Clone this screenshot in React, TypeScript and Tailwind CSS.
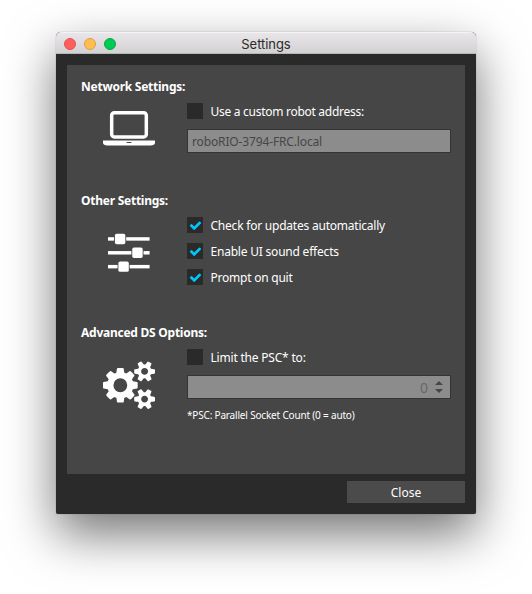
import type { ReactNode } from "react";

const SMALL_COG =
  "v140q0 16-149 31-12 27-30 52 51 113 51 138 0 4-4 7-122 71-124 71-8 0-46-47t-52-68q-20 2-30 2t-30-2q-14 21-52 68t-46 47q-2 0-124-71-4-3-4-7 0-25 51-138-18-25-30-52-149-15-149-31v-140q0-16 149-31 13-29 30-52-51-113-51-138 0-4 4-7 4-2 35-20t59-34 30-16q8 0 46 46.5t52 67.5q20-2 30-2t30 2q51-71 92-112l6-2q4 0 124 70 4 3 4 7 0 25-51 138 17 23 30 52 149 15 149 31z";

function LaptopIcon() {
  return (
    <svg viewBox="0 0 1920 1792" className="h-[48.5px] w-[52px] fill-white">
      <path d="M416 1280q-66 0-113-47t-47-113v-704q0-66 47-113t113-47h1088q66 0 113 47t47 113v704q0 66-47 113t-113 47h-1088zm-32-864v704q0 13 9.5 22.5t22.5 9.5h1088q13 0 22.5-9.5t9.5-22.5v-704q0-13-9.5-22.5t-22.5-9.5h-1088q-13 0-22.5 9.5t-9.5 22.5zm1376 928h160v96q0 40-47 68t-113 28h-1600q-66 0-113-28t-47-68v-96h1760zm-720 96q16 0 16-16t-16-16h-160q-16 0-16 16t16 16h160z" />
    </svg>
  );
}

function SlidersIcon() {
  const rows = [
    { y: 192, knob: 256 },
    { y: 704, knob: 896 },
    { y: 1216, knob: 384 },
  ];
  return (
    <svg viewBox="0 0 1536 1536" className="size-[41.6px] fill-white">
      {rows.map(({ y, knob }) => (
        <g key={y}>
          <rect x="0" y={y} width={knob - 32} height="128" />
          <rect x={knob} y={y - 128} width="384" height="384" rx="64" />
          <rect x={knob + 416} y={y} width={1536 - knob - 416} height="128" />
        </g>
      ))}
    </svg>
  );
}

function CogsIcon() {
  return (
    <svg viewBox="0 0 1920 1792" className="h-[48.5px] w-[52px] fill-white">
      <path
        d={
          "M896 896q0-106-75-181t-181-75-181 75-75 181 75 181 181 75 181-75 75-181zm768 512q0-52-38-90t-90-38-90 38-38 90q0 53 37.5 90.5t90.5 37.5 90.5-37.5 37.5-90.5zm0-1024q0-52-38-90t-90-38-90 38-38 90q0 53 37.5 90.5t90.5 37.5 90.5-37.5 37.5-90.5zm-384 421v185q0 10-7 19.5t-16 10.5l-155 24q-11 35-32 76 34 48 90 115 7 11 7 20 0 12-7 19-23 30-82.5 89.5t-78.5 59.5q-11 0-21-7l-115-90q-37 19-77 31-11 108-23 155-7 24-30 24h-186q-11 0-20-7.5t-10-17.5l-23-153q-34-10-75-31l-118 89q-7 7-20 7-11 0-21-8-144-133-144-160 0-9 7-19 10-14 41-53t47-61q-23-44-35-82l-152-24q-10-1-17-9.5t-7-19.5v-185q0-10 7-19.5t16-10.5l155-24q11-35 32-76-34-48-90-115-7-11-7-20 0-12 7-20 22-30 82-89t79-59q11 0 21 7l115 90q34-18 77-32 11-108 23-154 7-24 30-24h186q11 0 20 7.5t10 17.5l23 153q34 10 75 31l118-89q8-7 20-7 11 0 21 8 144 133 144 160 0 8-7 19-12 16-42 54t-45 60q23 48 34 82l152 23q10 2 17 10.5t7 19.5zM1920 1338" +
          SMALL_COG +
          "M1920 314" +
          SMALL_COG
        }
      />
    </svg>
  );
}

function CheckRow({ checked, label, tracking }: { checked?: boolean; label: string; tracking: string }) {
  return (
    <label className="flex h-4 items-center gap-[7.5px]">
      <span className="flex size-4 items-center justify-center bg-[#2a2a2a]">
        {checked && (
          <svg viewBox="0 0 1792 1792" className="size-[13px] fill-[#00c8ff]">
            <path d="M1671 566q0 40-28 68l-724 724-136 136q-28 28-68 28t-68-28l-136-136-362-362q-28-28-28-68t28-68l136-136q28-28 68-28t68 28l294 295 656-657q28-28 68-28t68 28l136 136q28 28 28 68z" />
          </svg>
        )}
      </span>
      <span className={"pt-0.5 leading-4 whitespace-nowrap " + tracking}>{label}</span>
    </label>
  );
}

function Section({
  title,
  icon,
  className,
  iconClass,
  children,
}: {
  title: string;
  icon: ReactNode;
  className: string;
  iconClass: string;
  children: ReactNode;
}) {
  return (
    <section className={className}>
      <h2 className="h-4 pt-px leading-4 font-bold tracking-[-0.25px] whitespace-nowrap">{title}</h2>
      <div className="flex pt-[9px]">
        <div className={"flex w-[106px] shrink-0 items-start " + iconClass}>{icon}</div>
        <div className="flex flex-1 flex-col gap-2.5">{children}</div>
      </div>
    </section>
  );
}

export default function App() {
  return (
    <main className="h-[594px] w-[532px] overflow-hidden bg-white px-14 pt-8 font-['Noto_Sans',sans-serif] text-[12px] text-white">
      <div className="flex h-[482px] w-[420px] flex-col rounded-t-[5px] rounded-b-[2px] bg-[#2a2a2a] shadow-[0_0_1px_rgba(0,0,0,0.5),0_20px_50px_rgba(0,0,0,0.55)]">
        <header className="grid h-[22px] shrink-0 grid-cols-[1fr_auto_1fr] items-center rounded-t-[5px] border-t border-b border-t-[#f4f3f4] border-b-[#b4b8b3] bg-linear-to-b from-[#e8e6e8] to-[#d3d1d3]">
          <div className="flex gap-2 pl-2">
            <i className="size-3 rounded-full border border-[#e2514e] bg-[#ff5f5c]" />
            <i className="size-3 rounded-full border border-[#dfa044] bg-[#ffbe4f]" />
            <i className="size-3 rounded-full border border-[#05a941] bg-[#00cb56]" />
          </div>
          <h1 className="pt-px font-['Inter',sans-serif] text-[13px] leading-5 tracking-[-0.05px] text-[#2b292b]">
            Settings
          </h1>
          <span />
        </header>

        <div className="flex flex-1 flex-col gap-[7px] p-[11px]">
          <div className="h-[409px] bg-[#464646] px-3.5 pt-[13px]">
            <Section
              title="Network Settings:"
              icon={<LaptopIcon />}
              className="h-[114px]"
              iconClass="pl-[22px] pt-px"
            >
              <CheckRow label="Use a custom robot address:" tracking="tracking-[-0.28px]" />
              <div className="flex h-6 w-[264px] items-center border border-[#343434] bg-[#8c8c8c] pt-px pl-1 text-[#464646]">
                <span className="tracking-[-0.14px] whitespace-nowrap">roboRIO-3794-FRC.local</span>
              </div>
            </Section>

            <Section
              title="Other Settings:"
              icon={<SlidersIcon />}
              className="h-[132px]"
              iconClass="pl-[27px] pt-[15px]"
            >
              <CheckRow checked label="Check for updates automatically" tracking="tracking-[-0.22px]" />
              <CheckRow checked label="Enable UI sound effects" tracking="tracking-[-0.21px]" />
              <CheckRow checked label="Prompt on quit" tracking="tracking-[-0.23px]" />
            </Section>

            <Section
              title="Advanced DS Options:"
              icon={<CogsIcon />}
              className="h-[120px]"
              iconClass="pl-[22px] pt-3"
            >
              <CheckRow label="Limit the PSC* to:" tracking="tracking-[-0.2px]" />
              <div className="flex h-6 w-[264px] items-center justify-end gap-[7px] border border-[#343434] bg-[#8c8c8c] pr-[7px] text-[#686868]">
                <span className="pt-px text-[14px]">0</span>
                <svg viewBox="0 0 8 12" className="h-3 w-2 fill-[#464646]">
                  <path d="M4 0L8 4H0ZM0 8H8L4 12Z" />
                </svg>
              </div>
              <p className="text-[10px] leading-3 tracking-[-0.18px] whitespace-nowrap">
                *PSC: Parallel Socket Count (0 = auto)
              </p>
            </Section>
          </div>
          <button className="h-[22px] w-[118px] self-end bg-[#4b4b4b] pt-px leading-[21px]">Close</button>
        </div>
      </div>
    </main>
  );
}
